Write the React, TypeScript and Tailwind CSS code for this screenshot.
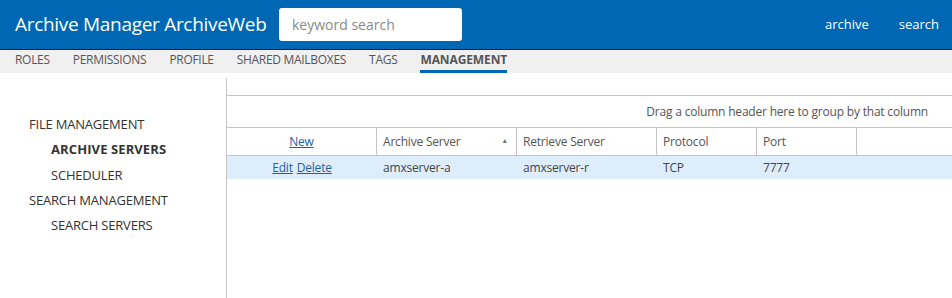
import React from 'react';

const navItems = ['ROLES', 'PERMISSIONS', 'PROFILE', 'SHARED MAILBOXES', 'TAGS', 'MANAGEMENT'];

const sideItems = [
  { label: 'FILE MANAGEMENT', sub: false, active: false },
  { label: 'ARCHIVE SERVERS', sub: true, active: true },
  { label: 'SCHEDULER', sub: true, active: false },
  { label: 'SEARCH MANAGEMENT', sub: false, active: false },
  { label: 'SEARCH SERVERS', sub: true, active: false },
];

const cols = 'grid grid-cols-[150px_140px_140px_100px_100px_1fr]';

const App = () => {
  return (
    <div className="w-[952px] h-[298px] overflow-hidden bg-white" style={{ fontFamily: '"Open Sans", sans-serif' }}>
      <div className="h-[50px] bg-[#0067b4] border-b border-[#1a1a1a] flex items-center pl-[15px] pr-[13px]">
        <div className="text-white text-[19px] tracking-[-0.3px] w-[264px]">Archive Manager ArchiveWeb</div>
        <div className="h-[33px] w-[183px] bg-white rounded-[3px] flex items-center px-[13px] text-[14px] text-[#8a8a8a]">
          keyword search
        </div>
        <div className="ml-auto flex gap-[30px] text-white text-[13px]">
          <span>archive</span>
          <span>search</span>
        </div>
      </div>

      <div className="h-[23px] bg-[#f0f0f0] flex pl-[15px] gap-[23px] text-[12px] text-[#555]">
        {navItems.map((n) => (
          <div
            key={n}
            className={
              n === 'MANAGEMENT'
                ? 'font-bold h-full pt-[1px] border-b-[3px] border-[#0067b4] tracking-[-0.1px]'
                : 'h-full pt-[1px] tracking-[-0.3px]'
            }
          >
            {n}
          </div>
        ))}
      </div>

      <div className="flex">
        <div className="w-[226px] pt-[42px] pl-[29px] text-[13px] text-[#333]">
          {sideItems.map((s) => (
            <div
              key={s.label}
              className={`h-[25.3px] leading-[18px] ${s.sub ? 'pl-[22px]' : ''} ${
                s.active ? 'font-bold tracking-[0.1px]' : 'tracking-[-0.2px]'
              }`}
            >
              {s.label}
            </div>
          ))}
        </div>

        <div className="flex-1 mt-[5px] h-[220px] border-l border-[#c4c4c4]">
          <div className="h-[17px]" />
          <div className="border-t border-[#c4c4c4] h-[32px] flex items-center justify-end pr-[24px] text-[12px] text-[#555] tracking-[-0.2px]">
            Drag a column header here to group by that column
          </div>
          <div className={`${cols} border-t border-b border-[#c4c4c4] h-[29px] text-[12px] text-[#555] tracking-[-0.2px]`}>
            <div className="flex items-center justify-center border-r border-[#c4c4c4]">
              <span className="text-[#1f5fa6] underline">New</span>
            </div>
            <div className="flex items-center justify-between pl-[6px] pr-[8px] border-r border-[#c4c4c4]">
              <span>Archive Server</span>
              <span className="text-[7px] text-[#777]">▲</span>
            </div>
            <div className="flex items-center pl-[6px] border-r border-[#c4c4c4]">Retrieve Server</div>
            <div className="flex items-center pl-[6px] border-r border-[#c4c4c4]">Protocol</div>
            <div className="flex items-center pl-[6px] border-r border-[#c4c4c4]">Port</div>
            <div />
          </div>
          <div className={`${cols} h-[23px] bg-[#deedfc] text-[12px] text-[#444] tracking-[-0.2px]`}>
            <div className="flex items-center justify-center gap-[4px]">
              <span className="text-[#1f5fa6] underline">Edit</span>
              <span className="text-[#1f5fa6] underline">Delete</span>
            </div>
            <div className="flex items-center pl-[6px]">amxserver-a</div>
            <div className="flex items-center pl-[6px]">amxserver-r</div>
            <div className="flex items-center pl-[6px]">TCP</div>
            <div className="flex items-center pl-[6px]">7777</div>
            <div />
          </div>
        </div>
      </div>
    </div>
  );
};

export default App;
